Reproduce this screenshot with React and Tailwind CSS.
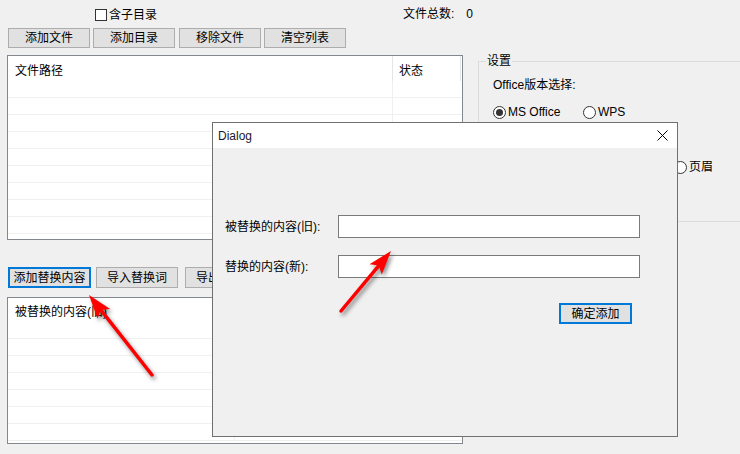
import React from 'react';

// Win32 style push button
const Btn = ({ children, className = '' }) => (
  <div className={`flex items-center justify-center bg-[#e1e1e1] text-[12px] leading-[14px] ${className}`}>
    {children}
  </div>
);

const Radio = ({ checked }) => (
  <div className="w-[13px] h-[13px] rounded-full border border-[#333333] bg-white flex items-center justify-center shrink-0">
    {checked && <div className="w-[7px] h-[7px] rounded-full bg-[#333333]" />}
  </div>
);

const Arrow = ({ x1, y1, x2, y2 }) => {
  // tip at (x2, y2)
  const dx = x2 - x1;
  const dy = y2 - y1;
  const len = Math.hypot(dx, dy);
  const ux = dx / len;
  const uy = dy / len;
  const hl = 24;
  const hw = 8;
  const bx = x2 - ux * hl;
  const by = y2 - uy * hl;
  const nx = -uy;
  const ny = ux;
  const notchX = x2 - ux * (hl - 5);
  const notchY = y2 - uy * (hl - 5);
  const pts = [
    `${x2},${y2}`,
    `${bx + nx * hw},${by + ny * hw}`,
    `${notchX},${notchY}`,
    `${bx - nx * hw},${by - ny * hw}`,
  ].join(' ');
  return (
    <g>
      <line x1={x1} y1={y1} x2={notchX} y2={notchY} stroke="#ff0000" strokeWidth="3.5" strokeLinecap="round" />
      <polygon points={pts} fill="#ff0000" />
    </g>
  );
};

export default function App() {
  const fileRows = Array.from({ length: 9 });
  const replaceRows = Array.from({ length: 7 });

  return (
    <div className="relative w-[740px] h-[454px] overflow-hidden bg-[#f0f0f0] text-[12px] leading-[14px] text-black font-['Liberation_Sans','Noto_Sans_CJK_SC',sans-serif]">
      {/* top row */}
      <div className="flex h-[28px] pt-[8px]">
        <div className="w-[403px] pl-[95px] flex items-center gap-[2px] h-[14px]">
          <div className="w-[12px] h-[12px] border border-[#333333] bg-white" />
          <span>含子目录</span>
        </div>
        <div className="flex -mt-[1px]">
          <span>文件总数:</span>
          <span className="ml-[12px]">0</span>
        </div>
      </div>

      {/* file buttons */}
      <div className="flex pl-[8px] h-[20px]">
        <Btn className="w-[82px] h-[20px] border border-[#adadad]">添加文件</Btn>
        <Btn className="ml-[3px] w-[82px] h-[20px] border border-[#adadad]">添加目录</Btn>
        <Btn className="ml-[4px] w-[82px] h-[20px] border border-[#adadad]">移除文件</Btn>
        <Btn className="ml-[3px] w-[82px] h-[20px] border border-[#adadad]">清空列表</Btn>
      </div>

      <div className="flex mt-[7px]">
        {/* left column */}
        <div className="ml-[7px] w-[456px] shrink-0">
          <div className="h-[185px] border border-[#828790] bg-white overflow-hidden">
            <div className="flex h-[25px]">
              <div className="w-[385px] pl-[7px] pt-[8px] border-r border-[#e5e5e5]">文件路径</div>
              <div className="w-[68px] pl-[6px] pt-[8px] border-r border-[#e5e5e5]">状态</div>
            </div>
            {fileRows.map((_, i) => (
              <div key={i} className="flex h-[17px] border-b border-[#f0f0f0]">
                <div className="w-[385px] border-r border-[#f0f0f0]" />
                <div className="w-[68px]" />
              </div>
            ))}
          </div>

          <div className="flex mt-[27px] h-[21px]">
            <Btn className="ml-[1px] w-[83px] h-[21px] border-2 border-[#0078d7]">添加替换内容</Btn>
            <Btn className="ml-[5px] w-[82px] h-[21px] border border-[#adadad]">导入替换词</Btn>
            <Btn className="ml-[7px] w-[82px] h-[21px] border border-[#adadad]">导出替换词</Btn>
          </div>

          <div className="mt-[9px] h-[147px] border border-[#828790] bg-white overflow-hidden">
            <div className="flex h-[24px]">
              <div className="w-[227px] pl-[7px] pt-[7px]">被替换的内容(旧)</div>
              <div className="pl-[6px] pt-[7px]">替换的内容(新)</div>
            </div>
            {replaceRows.map((_, i) => (
              <div key={i} className="flex h-[17px] border-b border-[#f0f0f0]">
                <div className="w-[227px] border-r border-[#f0f0f0]" />
              </div>
            ))}
          </div>
        </div>

        {/* settings group */}
        <fieldset className="ml-[15px] -mt-[1px] w-[300px] h-[168px] border border-[#dcdcdc] pl-[14px] shrink-0">
          <legend className="-ml-[7px] px-[1px]">设置</legend>
          <div className="mt-[10px]">Office版本选择:</div>
          <div className="flex items-center mt-[13px] h-[14px]">
            <Radio checked />
            <span className="ml-[2px] w-[75px]">MS Office</span>
            <Radio />
            <span className="ml-[2px]">WPS</span>
          </div>
          <div className="mt-[15px]">替换位置:</div>
          <div className="flex items-center mt-[12px] h-[14px]">
            <Radio checked />
            <span className="ml-[2px] w-[166px]">正文</span>
            <Radio />
            <span className="ml-[2px]">页眉</span>
          </div>
        </fieldset>
      </div>

      {/* Dialog window */}
      <div className="absolute left-[212px] top-[122px] w-[466px] h-[315px] border border-[#707070] bg-[#f0f0f0] flex flex-col">
        <div className="h-[25px] bg-white flex items-center justify-between pl-[5px] pr-[9px] shrink-0">
          <span className="text-[#1a1a2e]">Dialog</span>
          <svg width="11" height="11" viewBox="0 0 11 11">
            <path d="M0.5 0.5 L10.5 10.5 M10.5 0.5 L0.5 10.5" stroke="#000" strokeWidth="1" />
          </svg>
        </div>
        <div className="pt-[67px]">
          <div className="flex items-center">
            <div className="w-[125px] pl-[12px]">被替换的内容(旧):</div>
            <div className="w-[302px] h-[23px] border border-[#7a7a7a] bg-white" />
          </div>
          <div className="flex items-center mt-[17px]">
            <div className="w-[125px] pl-[12px]">替换的内容(新):</div>
            <div className="w-[302px] h-[23px] border border-[#7a7a7a] bg-white" />
          </div>
          <Btn className="mt-[25px] ml-[346px] w-[73px] h-[21px] border-2 border-[#0078d7]">确定添加</Btn>
        </div>
      </div>

      {/* annotation arrows */}
      <svg className="absolute inset-0 pointer-events-none drop-shadow-[2px_3px_2px_rgba(0,0,0,0.45)]" width="740" height="454">
        <Arrow x1={152} y1={375} x2={89} y2={295} />
        <Arrow x1={341} y1={311} x2={391} y2={251} />
      </svg>
    </div>
  );
}
